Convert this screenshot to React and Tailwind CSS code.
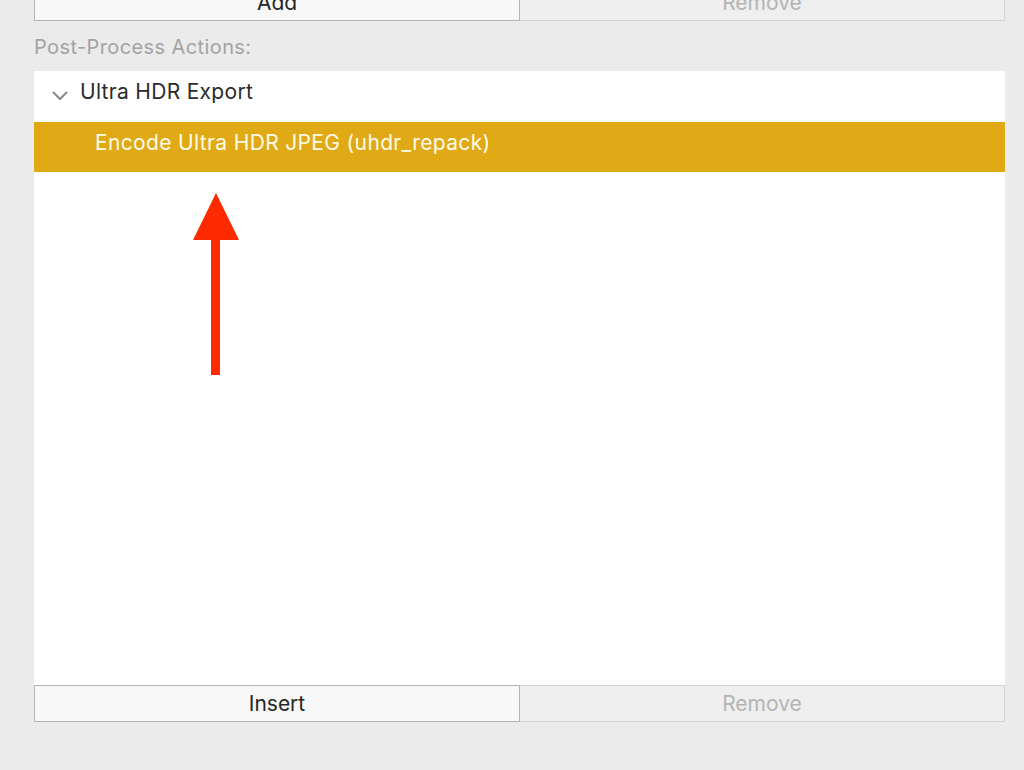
import React from 'react';

const font = { fontFamily: 'Inter, "Liberation Sans", sans-serif' };

const ButtonBar = ({ left, className = '' }) => (
  <div className={`flex h-[37px] ${className}`}>
    <button className="flex-1 flex items-center justify-center bg-[#f8f8f8] border border-[#b3b3b3] text-[21px] text-[#262626]">
      {left}
    </button>
    <button className="flex-1 flex items-center justify-center bg-[#efefef] border border-l-0 border-[#d4d4d4] text-[21px] text-[#b4b4b4]">
      Remove
    </button>
  </div>
);

export default function App() {
  return (
    <div className="w-[1024px] h-[770px] overflow-hidden bg-[#ebebeb] pl-[34px] pr-[19px]" style={font}>
      <ButtonBar left="Add" className="-mt-[16px]" />
      <div className="mt-[14px] text-[20px] leading-[24px] tracking-[0.4px] text-[#a3a3a3]">Post-Process Actions:</div>
      <div className="mt-[12px] relative h-[614px] bg-white">
        <div className="h-[51px] flex items-center pb-[10px]">
          <svg width="18" height="12" viewBox="0 0 18 12" className="ml-[17px] mt-[8px]">
            <path d="M2 2 L9 9 L16 2" fill="none" stroke="#8a8a8a" strokeWidth="2" />
          </svg>
          <span className="ml-[11px] text-[21px] tracking-[0.3px] text-[#2b2b2b]">Ultra HDR Export</span>
        </div>
        <div className="h-[50px] flex items-center pb-[9px] bg-[#e0aa17] pl-[61px] text-[21px] tracking-[0.35px] text-[#fffbe8]">
          Encode Ultra HDR JPEG (uhdr_repack)
        </div>
        <svg className="absolute left-[158px] top-[120px]" width="50" height="185" viewBox="0 0 50 185">
          <polygon points="24,2 47,49 1,49" fill="#ff2a00" />
          <rect x="19" y="48" width="9" height="136" fill="#ff2a00" />
        </svg>
      </div>
      <ButtonBar left="Insert" />
    </div>
  );
}
